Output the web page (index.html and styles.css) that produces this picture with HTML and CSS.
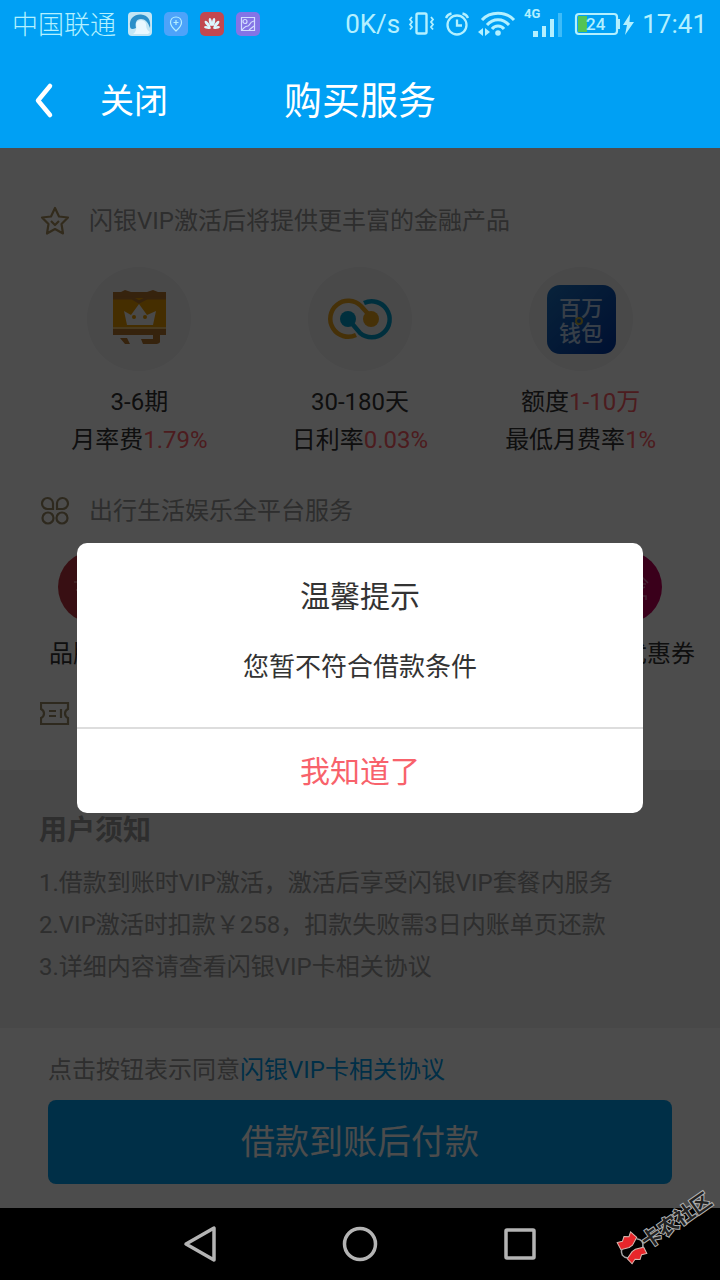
FILE: index.html
```html
<!DOCTYPE html>
<html lang="zh-CN">
<head>
<meta charset="utf-8">
<meta name="viewport" content="width=device-width, initial-scale=1">
<title>购买服务</title>
<link rel="stylesheet" href="styles.css">
</head>
<body>
<div class="app">
  <header class="top">
    <div class="status">
      <div class="status-group status-left">
        <span>中国联通</span>
        <svg class="app-icon" viewBox="0 0 24 24"><rect width="24" height="24" rx="4" fill="#c3e6f5"/><path d="M2 14C1 6 7 2 13 2.500C20 3 23 8 22 16C20 10 17 7 13 7C8 7 7 11 8 16C4 18 2 17 2 14Z" fill="#2b8fc9"/><path d="M8 12C9 7 17 7 18 12C18 17 20 19 22 20L20 22H5C8 20 9 16 8 12Z" fill="#e9f8ff"/></svg>
        <svg class="app-icon" viewBox="0 0 24 24"><rect width="24" height="24" rx="5" fill="#4da3fa"/><path d="M12 5C8.500 5 6.500 7.500 6.500 10.500C6.500 14 12 19 12 19S17.500 14 17.500 10.500C17.500 7.500 15.500 5 12 5ZM12 8V13M9.500 10.500H14.500" fill="none" stroke="#b5efff" stroke-width="1.200"/></svg>
        <svg class="app-icon" viewBox="0 0 24 24"><rect width="24" height="24" rx="5" fill="#c2474f"/><g fill="#dcf6ff"><ellipse cx="10.500" cy="10" rx="1.500" ry="4" transform="rotate(-12 10.500 10)"/><ellipse cx="13.500" cy="10" rx="1.500" ry="4" transform="rotate(12 13.500 10)"/><ellipse cx="7.500" cy="12" rx="1.500" ry="4" transform="rotate(-40 7.500 12)"/><ellipse cx="16.500" cy="12" rx="1.500" ry="4" transform="rotate(40 16.500 12)"/><ellipse cx="7.500" cy="15.500" rx="3.500" ry="1.300" transform="rotate(10 7.500 15.500)"/><ellipse cx="16.500" cy="15.500" rx="3.500" ry="1.300" transform="rotate(-10 16.500 15.500)"/></g></svg>
        <svg class="app-icon" viewBox="0 0 24 24"><rect width="24" height="24" rx="5" fill="#8474e6"/><g fill="none" stroke="#d2ddff" stroke-width="1.200"><path d="M5.500 5.500H18.500V18.500H5.500Z"/><circle cx="9" cy="9.500" r="2"/><path d="M6 18C9 15 9 14 12 14C14 14 13 10 18 9M13 18L18 14"/></g></svg>
      </div>
      <div class="status-group status-right">
        <span>0K/s</span>
        <svg width="28" height="26" viewBox="0 0 28 26" fill="none" stroke="#b3f0ff"><rect x="8.500" y="2.500" width="10" height="20" rx="1.500" stroke-width="2.400"/><path d="M4 6L2 8.500L4 11L2 13.500L4 16L2 18.500M23 6L25 8.500L23 11L25 13.500L23 16L25 18.500" stroke-width="1.800"/></svg>
        <svg width="26" height="26" viewBox="0 0 26 26" fill="none" stroke="#b3f0ff" stroke-width="2.300"><circle cx="13" cy="14" r="9.500"/><path d="M13 8.500V14.500H18M2 7C3 4.500 5 3 7.500 2.500M24 7C23 4.500 21 3 18.500 2.500"/></svg>
        <svg width="38" height="26" viewBox="0 0 38 26" fill="none" stroke="#b3f0ff" stroke-width="3"><path d="M4 9C12 0 28 0 36 9M9 14C15 7 25 7 31 14M14 18C17 14 23 14 26 18"/><circle cx="20" cy="22" r="2.800" fill="#b3f0ff" stroke="none"/><path d="M5 17L0 21L5 25ZM7 17L12 21L7 25Z" fill="#b3f0ff" stroke="none"/></svg>
        <svg width="42" height="34" viewBox="0 0 42 34"><text class="net" x="0" y="11">4G</text><g fill="#b3f0ff"><rect x="9" y="24" width="5" height="6"/><rect x="18" y="19" width="4" height="11"/><rect x="26" y="12" width="4" height="18"/><rect x="34" y="6" width="4" height="24" opacity=".35"/></g></svg>
        <svg width="60" height="26" viewBox="0 0 60 26"><rect x="2" y="3" width="41" height="20" rx="3" fill="none" stroke="#b3f0ff" stroke-width="2.200"/><rect x="4" y="5" width="9" height="16" fill="#54c454"/><path d="M44 8H46V18H44Z" fill="#b3f0ff"/><text class="charge" x="12" y="19">24</text><path d="M56 3L49 14H53L51 24L60 11H55.500Z" fill="#b3f0ff"/></svg>
        <span class="clock">17:41</span>
      </div>
    </div>
    <div class="titlebar">
      <button class="back" type="button" aria-label="返回"><svg width="22" height="38" viewBox="0 0 22 38"><path d="M17 4L5 18.500L17 33" fill="none" stroke="#fff" stroke-width="4.500" stroke-linecap="round" stroke-linejoin="round"/></svg></button>
      <button class="close" type="button">关闭</button>
      <h1>购买服务</h1>
    </div>
  </header>

  <main class="page">
    <section class="benefits">
      <h2><svg width="30" height="30" viewBox="0 0 30 30" fill="none" stroke="#a88f60" stroke-width="2.200" stroke-linejoin="round"><path d="M15 2L19 10.500L28 11.500L21.500 18L23 27.500L15 23L7 27.500L8.500 18L2 11.500L11 10.500Z"/><path d="M11 15L15 19L19 15"/></svg>闪银VIP激活后将提供更丰富的金融产品</h2>
      <ul class="products">
        <li>
          <svg class="disc" viewBox="0 0 104 104"><circle cx="52" cy="52" r="52" fill="#f3f3f5"/><path d="M26 25H34L38 23L44 25H60L66 23L71 25H79V34H26Z" fill="#b5752c"/><path d="M26 31H79V64H26Z" fill="#e89b00"/><path d="M26 31H45L52 35L60 31H79" fill="none" stroke="#b5752c" stroke-width="3"/><path d="M26 62H79V68H73V75Q72 77 68 77H56L54 72H66V68H26ZM33 71H40L43 77H38Z" fill="#b5752c"/><path d="M26 61H79" stroke="#f3d08c" stroke-width="1.500"/><path d="M37 44L44 48L52 37L60 48L69 44L66 58H40Z" fill="#f3f3f5"/><circle cx="47" cy="50" r="2" fill="#e89b00"/><circle cx="58" cy="50" r="2" fill="#e89b00"/></svg>
          <p>3-6期</p><p>月率费<em>1.79%</em></p>
        </li>
        <li>
          <svg class="disc" viewBox="0 0 104 104"><circle cx="52" cy="52" r="52" fill="#f3f3f5"/><g fill="none" stroke-width="4.500"><path d="M48 68A18 18 0 1 1 53 39L63 50" stroke="#eba31c"/><path d="M56 36A18 18 0 1 1 52 66L41 53" stroke="#009fce"/></g><circle cx="40" cy="52" r="8" fill="#009fce"/><circle cx="63" cy="52" r="8" fill="#eba31c"/></svg>
          <p>30-180天</p><p>日利率<em>0.03%</em></p>
        </li>
        <li>
          <svg class="disc" viewBox="0 0 104 104"><defs><linearGradient id="wallet" x1="0" y1="0" x2="1" y2="1"><stop offset="0" stop-color="#1c74c4"/><stop offset="1" stop-color="#0036a4"/></linearGradient></defs><circle cx="52" cy="52" r="52" fill="#f3f3f5"/><rect x="18" y="18" width="69" height="69" rx="13" fill="url(#wallet)"/><text class="wallet" y="49"><tspan x="30">百万</tspan><tspan x="30" dy="25">钱包</tspan></text><circle cx="50" cy="54" r="3" fill="none" stroke="#b5a43c" stroke-width="2"/></svg>
          <p>额度<em>1-10万</em></p><p>最低月费率<em>1%</em></p>
        </li>
      </ul>

      <h2><svg width="30" height="30" viewBox="0 0 30 30" fill="none" stroke="#9a8a64" stroke-width="2.200"><path d="M13 13H8A5.500 5.500 0 1 1 13 8ZM17 13V8A5.500 5.500 0 1 1 22 13Z"/><circle cx="8" cy="22" r="5.500"/><circle cx="22" cy="22" r="5.500"/></svg>出行生活娱乐全平台服务</h2>
      <div class="services">
        <div class="service">
          <svg class="badge badge-left" viewBox="0 0 72 72"><circle cx="36" cy="36" r="36" fill="#bd3540"/><path d="M16 31H25M18 39H25" stroke="#e0777d" stroke-width="2"/></svg>
          <span>品牌</span>
        </div>
        <div class="service service-right">
          <svg class="badge badge-right" viewBox="0 0 72 72"><circle cx="36" cy="36" r="36" fill="#c4005c"/><path d="M50 24L58 32M50 33H56M50 38L55 36M51 45H56V49" fill="none" stroke="#e37aac" stroke-width="1.500"/></svg>
          <span>优惠券</span>
        </div>
      </div>
      <div class="coupon"><svg width="30" height="30" viewBox="0 0 30 30" fill="none" stroke="#9a8a64" stroke-width="2.200"><path d="M1 4H28V10C24 12 24 17 28 19V25H1V19C5 17 5 12 1 10Z"/><path d="M9 12H16M9 17H16M21 10V19"/></svg></div>
    </section>

    <section class="notice">
      <h2>用户须知</h2>
      <p>1.借款到账时VIP激活，激活后享受闪银VIP套餐内服务</p>
      <p>2.VIP激活时扣款￥258，扣款失败需3日内账单页还款</p>
      <p>3.详细内容请查看闪银VIP卡相关协议</p>
    </section>

    <section class="pay">
      <p>点击按钮表示同意<a href="#">闪银VIP卡相关协议</a></p>
      <button type="button">借款到账后付款</button>
    </section>

    <div class="overlay">
      <div class="dialog" role="dialog" aria-modal="true" aria-labelledby="tip">
        <div class="dialog-body">
          <h2 id="tip">温馨提示</h2>
          <p>您暂不符合借款条件</p>
        </div>
        <button type="button">我知道了</button>
      </div>
    </div>
  </main>

  <nav class="keys">
    <button type="button" aria-label="后退"><svg width="40" height="40" viewBox="0 0 40 40"><path d="M34 4V36L6 20Z"/></svg></button>
    <button type="button" aria-label="主页"><svg width="40" height="40" viewBox="0 0 40 40"><circle cx="20" cy="20" r="15.500"/></svg></button>
    <button type="button" aria-label="最近任务"><svg width="40" height="40" viewBox="0 0 40 40"><rect x="6" y="6" width="28" height="28" rx="1"/></svg></button>
    <svg class="watermark" width="110" height="100" viewBox="0 0 110 100"><g transform="rotate(-35 22 68)"><g fill="#e8262a" stroke="#d8b8b0" stroke-width="1"><path d="M20 66L12 63L13 55L18 57L22 54L26 57L30 54L32 62L24 66Z"/><path d="M20 71L12 74L13 81L18 79L22 82L26 79L31 81L32 74L24 71Z"/></g><path d="M31 63Q37 68 31 74M13 63Q7 68 13 74" fill="none" stroke="#a5a5a5" stroke-width="1.500"/><text class="mark" x="34" y="78">卡农社区</text></g></svg>
  </nav>
</div>
</body>
</html>
```

FILE: styles.css
```css
* {
  box-sizing: border-box;
}

body,
h1,
h2,
p,
ul {
  margin: 0;
  padding: 0;
}

body {
  font-family: Roboto, "Noto Sans CJK SC", sans-serif;
  font-size: 24px;
  background: #000;
}

button {
  border: 0;
  padding: 0;
  background: none;
  font: inherit;
  color: inherit;
}

svg {
  display: block;
  flex: none;
}

.app {
  display: flex;
  flex-direction: column;
  min-height: 100vh;
}

/* Status bar and title bar */
.top {
  background: #00a0f4;
  color: #fff;
}

.status {
  display: flex;
  justify-content: space-between;
  align-items: center;
  height: 48px;
  padding: 0 13px 0 12px;
  font-size: 26px;
  font-weight: 300;
  color: #b3f0ff;
}

.status-group {
  display: flex;
  align-items: center;
}

.status-left {
  gap: 12px;
}

.status-left span {
  padding-top: 3px;
  line-height: 45px;
}

.status-right {
  gap: 8px;
  font-weight: 400;
}

.app-icon {
  width: 24px;
  height: 24px;
}

.net {
  font-size: 13px;
  font-weight: 700;
  fill: #b3f0ff;
}

.charge {
  font-size: 17px;
  font-weight: 500;
  fill: #b3f0ff;
}

.titlebar {
  display: grid;
  grid-template-columns: 1fr auto 1fr;
  align-items: center;
  height: 100px;
  padding-top: 6px;
}

.titlebar h1 {
  grid-column: 2;
  grid-row: 1;
  font-size: 38px;
  font-weight: 400;
  line-height: 56px;
}

.back,
.close {
  grid-column: 1;
  grid-row: 1;
  justify-self: start;
}

.back {
  margin-left: 33px;
}

.close {
  margin-left: 100px;
  font-size: 34px;
  line-height: 56px;
}

/* Page content */
.page {
  position: relative;
  flex: 1;
  display: flex;
  flex-direction: column;
  background: #fff;
}

.benefits {
  padding: 55px 0 38px;
}

.benefits h2 {
  display: flex;
  align-items: center;
  gap: 19px;
  padding: 0 40px;
  font-size: 24px;
  font-weight: 400;
  line-height: 36px;
  color: #999;
}

.products {
  display: grid;
  grid-template-columns: repeat(3, 1fr);
  padding: 28px 29px 34px;
  list-style: none;
  text-align: center;
  line-height: 38px;
  color: #333;
}

.products em {
  font-style: normal;
  color: #ff6068;
}

.disc {
  width: 104px;
  height: 104px;
  margin: 0 auto 12px;
}

.wallet {
  font-size: 22px;
  font-weight: 500;
  fill: #b9d2f2;
}

.services {
  display: flex;
  justify-content: space-between;
  padding: 22px 25px 24px 49px;
  line-height: 36px;
  color: #333;
}

.service {
  display: flex;
  flex-direction: column;
  gap: 13px;
}

.service-right {
  align-items: flex-end;
}

.badge {
  width: 72px;
  height: 72px;
}

.badge-left {
  margin-left: 9px;
}

.badge-right {
  margin-right: 33px;
}

.coupon {
  display: flex;
  align-items: center;
  height: 36px;
  padding: 0 40px;
}

.notice {
  padding: 40px 39px;
  background: #f0f0f0;
  line-height: 42px;
  color: #999;
}

.notice h2 {
  margin-bottom: 10px;
  font-size: 28px;
  font-weight: 700;
}

.pay {
  display: flex;
  flex-direction: column;
  gap: 12px;
  padding: 24px 48px;
  line-height: 36px;
  color: #999;
}

.pay a {
  color: #009dee;
  text-decoration: none;
}

.pay button {
  height: 84px;
  border-radius: 8px;
  background: #009dee;
  font-size: 34px;
  color: #fff;
}

/* Dialog */
.overlay {
  position: absolute;
  inset: 0;
  display: flex;
  align-items: center;
  padding: 0 77px;
  background: rgba(0, 0, 0, 0.7);
}

.dialog {
  flex: 1;
  display: flex;
  flex-direction: column;
  overflow: hidden;
  border-radius: 10px;
  background: #fff;
  text-align: center;
  color: #333;
}

.dialog-body {
  display: flex;
  flex-direction: column;
  gap: 28px;
  padding: 32px 20px 40px;
  border-bottom: 2px solid #ddd;
}

.dialog h2 {
  font-size: 30px;
  font-weight: 400;
  line-height: 44px;
}

.dialog p {
  font-size: 26px;
  line-height: 40px;
}

.dialog button {
  height: 84px;
  padding-bottom: 4px;
  font-size: 30px;
  color: #f8626b;
}

/* Navigation keys */
.keys {
  position: relative;
  display: flex;
  justify-content: center;
  align-items: center;
  gap: 120px;
  height: 72px;
  background: #000;
}

.keys button svg {
  fill: none;
  stroke: #b4b4b4;
  stroke-width: 3.5;
  stroke-linejoin: round;
}

.watermark {
  position: absolute;
  right: 0;
  bottom: 0;
}

.mark {
  font-size: 20px;
  font-weight: 700;
  fill: #222;
  stroke: #b0b0b0;
  stroke-width: 2;
  paint-order: stroke;
}
```
